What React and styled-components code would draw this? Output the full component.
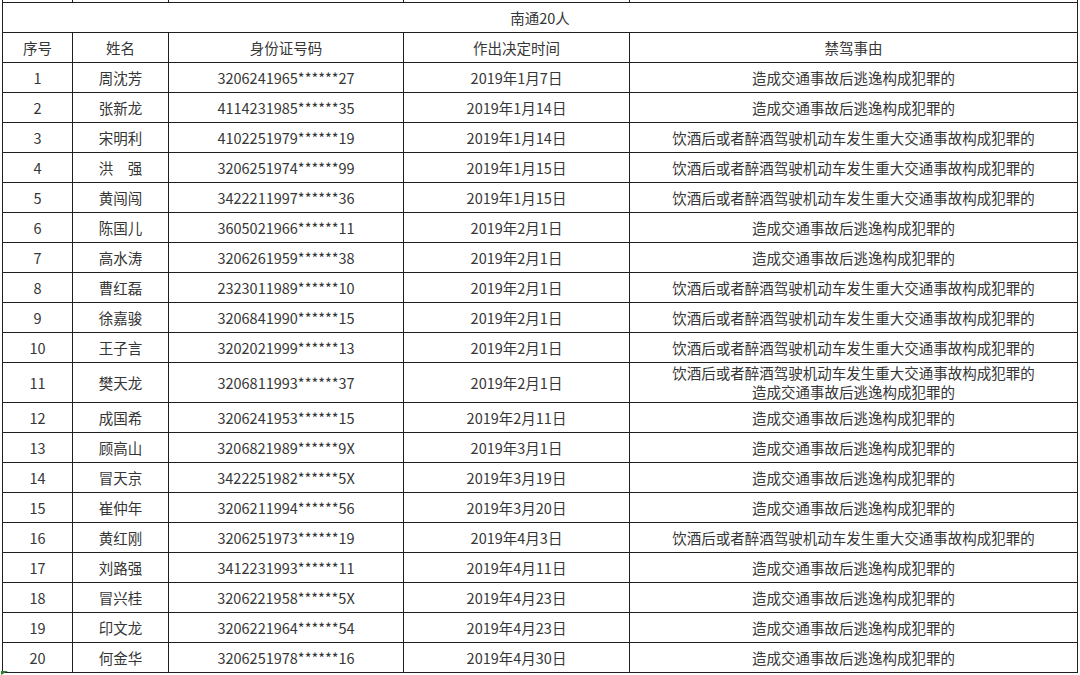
import React from "react";
import styled, { createGlobalStyle } from "styled-components";

const GlobalStyle = createGlobalStyle`
  html, body {
    margin: 0;
    padding: 0;
    background: #ffffff;
  }
`;

const Sheet = styled.div`
  position: relative;
  width: 1080px;
  height: 675px;
  overflow: hidden;
  background: #ffffff;
  padding-left: 2px;
  box-sizing: border-box;
  font-family: "Noto Sans CJK SC", "Liberation Sans", sans-serif;
  color: #363636;
`;

const Table = styled.table`
  border-collapse: collapse;
  table-layout: fixed;
  width: 1075px;
  margin-top: -1px;
`;

const Row = styled.tr`
  height: ${({ h }) => h || 30}px;
`;

const Cell = styled.td`
  border: 1px solid #1f1f1f;
  padding: 0;
  text-align: center;
  vertical-align: middle;
  font-size: 14.5px;
  line-height: 19px;
  white-space: nowrap;
  overflow: hidden;
`;

const StubCell = styled(Cell)`
  font-size: 0;
  line-height: 0;
  border-top: none;
`;

const ReasonLine = styled.div`
  line-height: 19px;
`;

const Corner = styled.svg`
  position: absolute;
  left: 1px;
  bottom: 0;
`;

const columns = [70, 96, 235, 226, 448];

const HIT = "造成交通事故后逃逸构成犯罪的";
const DRUNK = "饮酒后或者醉酒驾驶机动车发生重大交通事故构成犯罪的";

const rows = [
  ["周沈芳", "3206241965******27", "2019年1月7日", [HIT]],
  ["张新龙", "4114231985******35", "2019年1月14日", [HIT]],
  ["宋明利", "4102251979******19", "2019年1月14日", [DRUNK]],
  ["洪　强", "3206251974******99", "2019年1月15日", [DRUNK]],
  ["黄闯闯", "3422211997******36", "2019年1月15日", [DRUNK]],
  ["陈国儿", "3605021966******11", "2019年2月1日", [HIT]],
  ["高水涛", "3206261959******38", "2019年2月1日", [HIT]],
  ["曹红磊", "2323011989******10", "2019年2月1日", [DRUNK]],
  ["徐嘉骏", "3206841990******15", "2019年2月1日", [DRUNK]],
  ["王子言", "3202021999******13", "2019年2月1日", [DRUNK]],
  ["樊天龙", "3206811993******37", "2019年2月1日", [DRUNK, HIT]],
  ["成国希", "3206241953******15", "2019年2月11日", [HIT]],
  ["顾高山", "3206821989******9X", "2019年3月1日", [HIT]],
  ["冒天京", "3422251982******5X", "2019年3月19日", [HIT]],
  ["崔仲年", "3206211994******56", "2019年3月20日", [HIT]],
  ["黄红刚", "3206251973******19", "2019年4月3日", [DRUNK]],
  ["刘路强", "3412231993******11", "2019年4月11日", [HIT]],
  ["冒兴桂", "3206221958******5X", "2019年4月23日", [HIT]],
  ["印文龙", "3206221964******54", "2019年4月23日", [HIT]],
  ["何金华", "3206251978******16", "2019年4月30日", [HIT]],
];

const App = () => (
  <>
    <GlobalStyle />
    <Sheet>
      <Table>
        <colgroup>
          {columns.map((w, i) => (
            <col key={i} style={{ width: w }} />
          ))}
        </colgroup>
        <tbody>
          <Row h={3}>
            {columns.map((_, i) => (
              <StubCell key={i} />
            ))}
          </Row>
          <Row>
            <Cell colSpan={5}>南通20人</Cell>
          </Row>
          <Row>
            <Cell>序号</Cell>
            <Cell>姓名</Cell>
            <Cell>身份证号码</Cell>
            <Cell>作出决定时间</Cell>
            <Cell>禁驾事由</Cell>
          </Row>
          {rows.map(([name, id, date, reasons], i) => (
            <Row key={i} h={reasons.length > 1 ? 40 : 30}>
              <Cell>{i + 1}</Cell>
              <Cell>{name}</Cell>
              <Cell>{id}</Cell>
              <Cell>{date}</Cell>
              <Cell>
                {reasons.map((r, j) => (
                  <ReasonLine key={j}>{r}</ReasonLine>
                ))}
              </Cell>
            </Row>
          ))}
        </tbody>
      </Table>
      <Corner width="8" height="4" viewBox="0 0 8 4">
        <polygon points="0,0 7,0 0,4" fill="#2e7d32" />
      </Corner>
    </Sheet>
  </>
);

export default App;
